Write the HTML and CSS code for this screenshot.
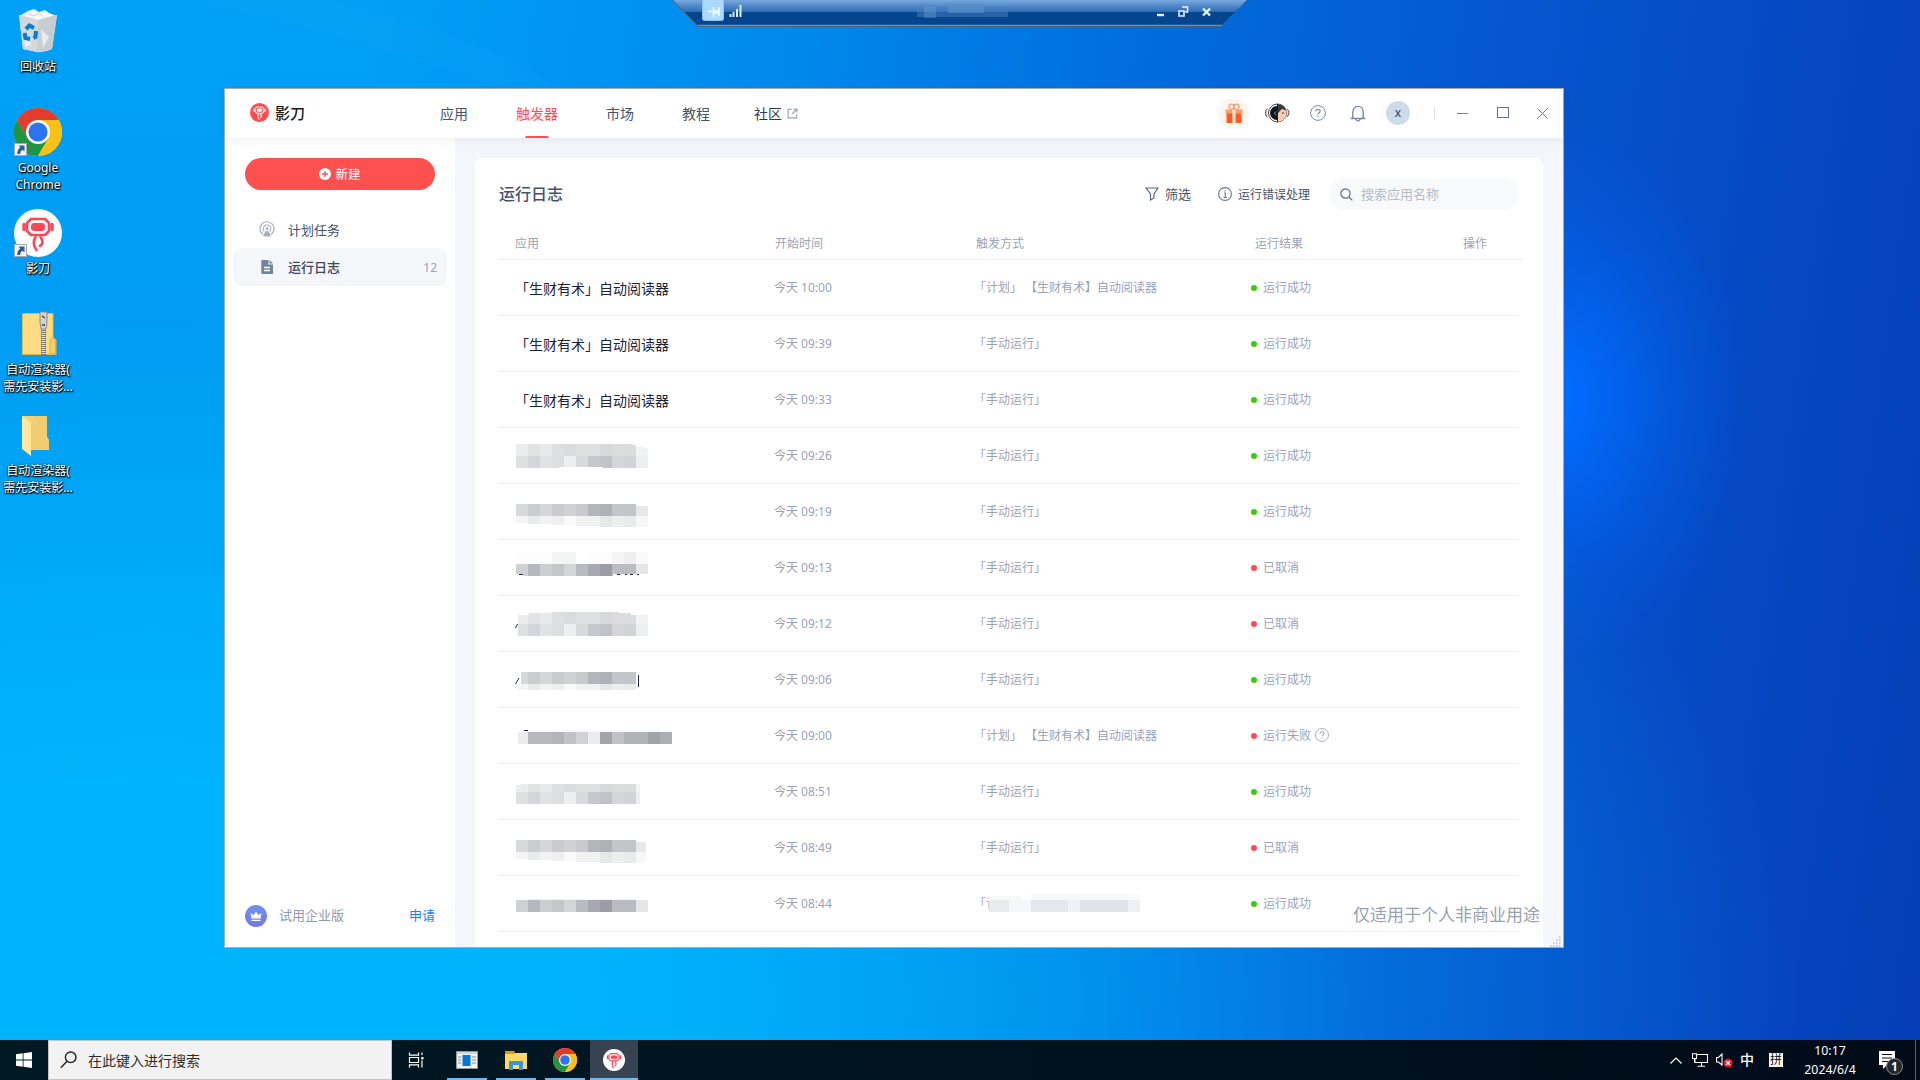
FILE: index.html
```html
<!DOCTYPE html>
<html lang="zh-CN">
<head>
<meta charset="utf-8">
<title>影刀</title>
<link rel="stylesheet" href="styles.css">
</head>
<body>
<svg class="defs" width="0" height="0">
  <defs>
    <symbol id="chrome" viewBox="0 0 48 48">
      <circle cx="24" cy="24" r="24" fill="#fbc116"/>
      <path d="M24 12H44.8A24 24 0 0 0 3.2 12L13.6 30Z" fill="#e33b2e"/>
      <path d="M3.2 12A24 24 0 0 0 24 48L34.4 30L24 24L13.6 30Z" fill="#229342"/>
      <path d="M34.4 30L24 48A24 24 0 0 0 44.8 12H24Z" fill="#fbc116"/>
      <circle cx="24" cy="24" r="12" fill="#fff"/>
      <circle cx="24" cy="24" r="9.6" fill="#2a74ee"/>
    </symbol>
    <symbol id="robot" viewBox="0 0 48 48">
      <g fill="none" stroke-linejoin="round" stroke-linecap="round">
        <path d="M17 10H31L35 14V22L31 26H17L13 22V14Z" stroke-width="2.6"/>
        <path d="M10 15.5V20.5M38 15.5V20.5" stroke-width="3.4"/>
        <path d="M21.5 28C18.5 33 19.5 37 22.500 41M26.500 28C29.500 32 29 35.500 26 37" stroke-width="2.6"/>
      </g>
      <rect x="17.500" y="14.500" width="13" height="7" rx="2.500" fill="currentColor"/>
    </symbol>
    <symbol id="shortcut" viewBox="0 0 13 13">
      <rect x=".5" y=".5" width="12" height="12" fill="#f4f4f4" stroke="#a8a8a8"/>
      <path d="M4.500 2.500H10.500V8.500L8.500 6.700C6.500 8 6.300 9 6.300 11H3.300C3.300 8 4 6.300 6.300 4.600Z" fill="#2b5c9e"/>
    </symbol>
    <symbol id="help" viewBox="0 0 16 16">
      <circle cx="8" cy="8" r="7.400" fill="none" stroke="currentColor"/>
      <path d="M5.900 6.300C5.900 3.600 10.200 3.700 10.200 6.200C10.200 7.800 8 7.800 8 9.500M8 10.800V12" fill="none" stroke="currentColor" stroke-width="1.200"/>
    </symbol>
    <linearGradient id="crown" x1="0" y1="0" x2="0" y2="1"><stop offset="0" stop-color="#6c92ee"/><stop offset="1" stop-color="#7678e4"/></linearGradient>
    <g id="mosaic-a">
      <path fill="#ebecee" d="M0 0h12v12H0z"/><path fill="#e2e3e5" d="M12 0h12v12H12z"/><path fill="#e8e9eb" d="M24 0h12v12H24z"/><path fill="#dddee0" d="M36 0h12v12H36z"/><path fill="#dadbdd" d="M48 0h12v12H48z"/><path fill="#dfe0e1" d="M60 0h24v12H60z"/><path fill="#d7d8da" d="M84 0h12v12H84z"/><path fill="#dddddf" d="M96 0h12v12H96z"/><path fill="#dbdcde" d="M108 0h12v12h-12z"/><path fill="#f1f2f2" d="M120 3h12v9h-12z"/>
      <path fill="#dfe0e2" d="M0 12h12v12H0z"/><path fill="#d4d5da" d="M12 12h12v12H12z"/><path fill="#e1e2e4" d="M24 12h12v12H24z"/><path fill="#dddee0" d="M36 12h12v12H36z"/><path fill="#edeef0" d="M48 12h12v12H48z"/><path fill="#d8d9dc" d="M60 12h12v12H60z"/><path fill="#c7c8cd" d="M72 12h12v12H72z"/><path fill="#c2c3c9" d="M84 12h12v12H84z"/><path fill="#d5d6da" d="M96 12h12v12H96z"/><path fill="#d2d3d6" d="M108 12h12v12h-12z"/><path fill="#eeeff1" d="M120 12h12v12h-12z"/>
    </g>
    <g id="mosaic-b">
      <path fill="#d7d8dc" d="M0 0h12v12H0z"/><path fill="#cbccd0" d="M12 0h12v12H12z"/><path fill="#d5d6d9" d="M24 0h12v12H24z"/><path fill="#cacbcf" d="M36 0h12v12H36z"/><path fill="#d0d1d5" d="M48 0h12v12H48z"/><path fill="#c8c9cc" d="M60 0h12v12H60z"/><path fill="#b5b6bc" d="M72 0h12v12H72z"/><path fill="#b0b1b8" d="M84 0h12v12H84z"/><path fill="#c4c5c9" d="M96 0h24v12H96z"/><path fill="#e8e8ea" d="M120 2h12v10h-12z"/>
      <path fill="#f5f5f5" d="M0 12h12v7H0z"/><path fill="#e9eaeb" d="M12 12h12v8H12z"/><path fill="#f2f2f2" d="M24 12h12v8H24z"/><path fill="#efefef" d="M36 12h12v9H36z"/><path fill="#f9f9f9" d="M48 12h12v9H48z"/><path fill="#f1f1f1" d="M60 12h24v10H60z"/><path fill="#e6e7e9" d="M84 12h12v11H84z"/><path fill="#eee" d="M96 12h12v11H96z"/><path fill="#e9eaea" d="M108 12h12v11h-12z"/><path fill="#f7f7f7" d="M120 12h12v11h-12z"/>
    </g>
    <g id="mosaic-c">
      <path fill="#d0d1d3" d="M0 0h12v12H0z"/><path fill="#b7b8bd" d="M12 0h12v12H12z"/><path fill="#cdced2" d="M24 0h12v12H24z"/><path fill="#c5c6ca" d="M36 0h12v12H36z"/><path fill="#d4d5d9" d="M48 0h12v12H48z"/><path fill="#b9babf" d="M60 0h12v12H60z"/><path fill="#a8a9af" d="M72 0h12v12H72z"/><path fill="#9b9da5" d="M84 0h12v12H84z"/><path fill="#bbbcc1" d="M96 0h24v12H96z"/><path fill="#e6e6e8" d="M120 0h12v12h-12z"/>
    </g>
  </defs>
</svg>

<div class="desktop">
  <svg class="rays" viewBox="0 0 1920 1080">
    <path d="M330 0Q480 35 560 88H500Q330 30 180 0Z" fill="#20b0ff" opacity=".08"/>
  </svg>

  <div class="shortcuts">
    <div class="shortcut">
      <svg width="48" height="48" viewBox="0 0 48 48">
        <path d="M5 8L43 8L38 42Q30 46 23 45L9 42Z" fill="#dfe3e6"/>
        <path d="M5 8L24 12L23 45L9 42Z" fill="#d3d8dc"/>
        <path d="M24 12L43 8L38 42L23 45Z" fill="#c8cdd1"/>
        <path d="M27 22L35 30L29 41ZM11 28L18 38L11 40Z" fill="#e9ecee"/>
        <path d="M7 8L14 4L20 2L25 5L31 3L35 6L40 8L24 13Z" fill="#f8f9fa"/>
        <path d="M14 7L20 9L25 6L30 10" fill="none" stroke="#cdd2d6"/>
        <g fill="none" stroke="#0c79d0" stroke-width="4"><path d="M12 22L15.500 18.500L20 21"/><path d="M22 24L21.500 30L19.500 31"/><path d="M16 32L11.500 31L10.500 26"/></g>
      </svg>
      <span class="shortcut-name">回收站</span>
    </div>
    <div class="shortcut">
      <div class="pic"><svg width="48" height="48"><use href="#chrome"/></svg><svg class="arrow" width="13" height="13"><use href="#shortcut"/></svg></div>
      <span class="shortcut-name">Google<br>Chrome</span>
    </div>
    <div class="shortcut">
      <div class="pic robot-disc"><svg width="48" height="48" stroke="#ff4556"><use href="#robot"/></svg><svg class="arrow" width="13" height="13"><use href="#shortcut"/></svg></div>
      <span class="shortcut-name">影刀</span>
    </div>
    <div class="shortcut">
      <svg width="48" height="48" viewBox="0 0 48 48">
        <path d="M8.500 3.500H39V27L42 30V44.500H8.500Z" fill="#fbdc82" stroke="#e6b84a"/>
        <path d="M36 44V31L38.500 27L41.500 30V44Z" fill="#f6cd66" stroke="#dfb04a"/>
        <path d="M29.500 17V45" stroke="#777" stroke-width="5"/><path d="M29.500 17V45" stroke="#e6e6e6" stroke-width="4" stroke-dasharray="1 1"/>
        <path d="M26 2H33V12L32 19H27L26 12Z" fill="#d2d2d4" stroke="#8a8a8c"/><path d="M28 6L31 8M28 15H31" stroke="#444" stroke-width="1.500"/>
      </svg>
      <span class="shortcut-name">自动渲染器(<br>需先安装影...</span>
    </div>
    <div class="shortcut">
      <svg width="48" height="48" viewBox="0 0 48 48">
        <path d="M8 5H33V26L35 29V39H16Z" fill="#f5d27a"/><path d="M20 5H33V26L35 29V39H17V12Z" fill="#f1cd70"/>
        <path d="M8 5L17 12V45L8 38Z" fill="#ffe79b"/>
      </svg>
      <span class="shortcut-name">自动渲染器(<br>需先安装影...</span>
    </div>
  </div>

  <svg class="rdp-bar" width="576" height="27" viewBox="0 0 576 27">
    <defs><linearGradient id="rdp" x1="0" y1="0" x2="0" y2="1"><stop offset="0" stop-color="#76a8de"/><stop offset=".48" stop-color="#2a6ab2"/><stop offset=".48" stop-color="#04458e"/><stop offset="1" stop-color="#04458e"/></linearGradient></defs>
    <path d="M.5 0L26 25.500H549.500L575 0Z" fill="url(#rdp)"/>
    <path d="M26 25.300H550" stroke="#7fa9d8"/><path d="M.5 0L26 26.400H550L575.500 0" fill="none" stroke="#54606c"/>
    <rect x="30.500" y="-2" width="21" height="22.500" rx="2" fill="#acd9ff" stroke="#8cc8fa"/>
    <path d="M36 11.500H41M41.500 7V17M42 11.500H47M47 7V16" stroke="#e9f6ff" stroke-width="1.800"/><path d="M42 10H47V14H42Z" fill="#e9f6ff"/>
    <path d="M58.500 17V14M61.500 17V12M65 17V9M68.500 17V5" stroke="#d8edff" stroke-width="2"/>
    <path d="M245 6h91v11h-91z" fill="#4a80c0" opacity=".5"/><path d="M252 7h12v11h-12zM276 6h36v7h-36z" fill="#6b9dd4" opacity=".4"/>
    <path d="M485 15H492" stroke="#e4f2ff" stroke-width="2.400"/>
    <path d="M507 11H512V16H507ZM510 7H515.500V12H513" fill="none" stroke="#e4f2ff" stroke-width="1.600"/>
    <path d="M531 8.500L538 15.500M538 8.500L531 15.500" stroke="#e4f2ff" stroke-width="2.400"/>
  </svg>

  <main class="window">
    <header class="topbar">
      <div class="brand">
        <svg width="19" height="19" viewBox="0 0 48 48" stroke="#fff" color="#fff"><circle cx="24" cy="24" r="24" fill="#ff4d4f" stroke="none"/><use href="#robot" width="48" height="48"/></svg>
        <span>影刀</span>
      </div>
      <nav class="tabs">
        <a class="tab">应用</a><a class="tab tab-active">触发器</a><a class="tab">市场</a><a class="tab">教程</a>
        <a class="tab tab-community">社区<svg width="11" height="11" viewBox="0 0 12 12" fill="none" stroke="#98a2b5" stroke-width="1.300"><path d="M5 1.500H1.200V10.800H10.500V7M7 1.200H10.800V5M10.500 1.500L5.500 6.500"/></svg></a>
      </nav>
      <div class="tools">
        <span class="gift"><svg width="18" height="21" viewBox="0 0 18 21"><path d="M1.500 9H16.500V20H1.500Z" fill="#ff5a26"/><path d="M.5 6.500H17.500V10.500H.5Z" fill="#ffa060"/><path d="M7.500 7H10.500V20H7.500Z" fill="#fff0dc"/><circle cx="6.500" cy="3.800" r="2.600" fill="none" stroke="#f79a78" stroke-width="1.300"/><circle cx="11.500" cy="3.800" r="2.600" fill="none" stroke="#f79a78" stroke-width="1.300"/></svg></span>
        <svg class="mascot" width="25" height="20" viewBox="0 0 25 20"><path d="M2.500 6Q.5 6 .5 10T2.500 14M22 6Q24.500 7 24 10T22 14" fill="#ddd" stroke="#555"/><circle cx="12.500" cy="10" r="9" fill="#fff" stroke="#444"/><circle cx="12" cy="10" r="7" fill="#14171a"/><path d="M12.500 1A9 9 0 0 1 12.500 19Z" fill="#f6cdb2"/><path d="M12.500 1Q19.500 1 21 7.500L17 6L13.500 9.500L12.500 11Z" fill="#333a40"/><path d="M12.500 1V19" stroke="#222"/><path d="M11 8.500L9.500 10L11 12" fill="none" stroke="#29b8c4"/><path d="M18 9V11" stroke="#333"/></svg>
        <svg class="help" width="16" height="16"><use href="#help"/></svg>
        <svg class="bell" width="16" height="17" viewBox="0 0 16 17" fill="none" stroke="#7b899f" stroke-width="1.400"><path d="M2.800 13.500V7C2.800 -.5 13.200 -.5 13.200 7V13.500M.5 13.500H15.500M5.500 14Q8 18 10.500 14"/></svg>
        <span class="avatar">x</span>
        <span class="rule"></span>
        <svg class="min" width="12" height="12"><path d="M0 6.500H11" stroke="#74829a" stroke-width="1"/></svg>
        <svg class="max" width="12" height="12"><rect x=".5" y=".5" width="11" height="10" fill="none" stroke="#66758f"/></svg>
        <svg class="close" width="11" height="11"><path d="M.5 .5L10.500 10.500M10.500 .5L.5 10.500" stroke="#66758f"/></svg>
      </div>
    </header>

    <div class="body">
      <aside class="sidebar">
        <button class="create"><svg width="12" height="12" viewBox="0 0 12 12"><circle cx="6" cy="6" r="6" fill="#fff"/><path d="M3 6H9M6 3V9" stroke="#ff5050" stroke-width="1.300"/></svg><span>新建</span></button>
        <div class="menu">
          <a class="menu-item"><svg width="16" height="16" viewBox="0 0 16 16" fill="none" stroke="#a5aebe" stroke-width="1.200"><path d="M4 13.500A7 7 0 1 1 12 13.500"/><path d="M5.300 10.500A3.800 3.800 0 1 1 10.700 10.500"/><circle cx="8" cy="7.500" r="1"/><path d="M5 15Q6 10.500 8 10.500T11 15Z" fill="#a5aebe"/></svg><span>计划任务</span></a>
          <a class="menu-item menu-active"><svg width="16" height="16" viewBox="0 0 16 16"><path d="M3 1H9.500V5.500H14V15H3Q2.300 15 2.300 14V2Q2.300 1 3 1Z" fill="#75849e"/><path d="M10.500 1L14 4.500H10.500Z" fill="#75849e"/><path d="M5 8.500H11M5 11.500H11" stroke="#fff" stroke-width="1.300"/></svg><span>运行日志</span><em>12</em></a>
        </div>
        <div class="trial">
          <svg width="22" height="22" viewBox="0 0 22 22"><circle cx="11" cy="11" r="11" fill="url(#crown)"/><path d="M5.500 8L8.500 10L11 6.500L13.500 10L16.500 8L15.500 13.500H6.500ZM6.500 14.700H15.500V16H6.500Z" fill="#fff"/></svg>
          <span>试用企业版</span><a>申请</a>
        </div>
      </aside>

      <section class="card">
        <div class="card-head">
          <h1>运行日志</h1>
          <div class="filter"><svg width="14" height="14" viewBox="0 0 14 14" fill="none" stroke="#5b6880" stroke-width="1.200"><path d="M1 1H13L9 7V11L5.500 13V7Z"/></svg><span>筛选</span></div>
          <div class="errors"><svg width="14" height="14" viewBox="0 0 14 14" fill="none" stroke="#6b778c" stroke-width="1.100"><circle cx="7" cy="7" r="6.400"/><path d="M6 6H7.300V10.500M5.500 10.500H9M7 3.200V4.500"/></svg><span>运行错误处理</span></div>
          <div class="search"><svg width="13" height="13" viewBox="0 0 13 13" fill="none" stroke="#5b6880" stroke-width="1.200"><circle cx="5.500" cy="5.500" r="4.600"/><path d="M9 9L12.300 12.300"/></svg><span>搜索应用名称</span></div>
        </div>
        <div class="row row-head"><span>应用</span><span>开始时间</span><span>触发方式</span><span>运行结果</span><span>操作</span></div>
        <div class="rows">
          <div class="row"><b>「生财有术」自动阅读器</b><span>今天 10:00</span><span>「计划」 【生财有术】自动阅读器</span><span class="ok">运行成功</span></div>
          <div class="row"><b>「生财有术」自动阅读器</b><span>今天 09:39</span><span>「手动运行」</span><span class="ok">运行成功</span></div>
          <div class="row"><b>「生财有术」自动阅读器</b><span>今天 09:33</span><span>「手动运行」</span><span class="ok">运行成功</span></div>
          <div class="row"><svg class="masked" width="160" height="55"><use href="#mosaic-a" x="1" y="16"/><path d="M116 16H133V21Q124 18 116 16ZM44 39H88V41H44Z" fill="#fff"/></svg><span>今天 09:26</span><span>「手动运行」</span><span class="ok">运行成功</span></div>
          <div class="row"><svg class="masked" width="160" height="55"><use href="#mosaic-b" x="1" y="20"/></svg><span>今天 09:19</span><span>「手动运行」</span><span class="ok">运行成功</span></div>
          <div class="row"><svg class="masked" width="160" height="55"><path d="M37 12h24v12H37z" fill="#f3f5f5"/><path d="M1 12h36v12H1zM73 12h24v12H73z" fill="#fcfcfc"/><path d="M97 12h12v12H97z" fill="#f5f5f5"/><path d="M109 12h12v12h-12z" fill="#efefef"/><path d="M121 12h12v12h-12z" fill="#f9f9f9"/><use href="#mosaic-c" x="1" y="24"/><path d="M1 34H8V36H1ZM98 34H134V36H98Z" fill="#fff"/><path d="M4 34.500H8M102 34.500H105M110 34.500H112M115 34.500H118M122 34.500H124" stroke="#222a3c"/></svg><span>今天 09:13</span><span>「手动运行」</span><span class="bad">已取消</span></div>
          <div class="row"><svg class="masked" width="160" height="55"><use href="#mosaic-a" x="1" y="16"/><path d="M0 16H36V17H14V19H3V41H0ZM104 16H134V19H116V17H104Z" fill="#fff"/><path d="M.5 32L2.500 28" stroke="#222a3c"/></svg><span>今天 09:12</span><span>「手动运行」</span><span class="bad">已取消</span></div>
          <div class="row"><svg class="masked" width="160" height="55"><use href="#mosaic-b" x="1" y="20"/><path d="M0 19H6V32H3V45H0ZM121 19H134V45H121ZM0 38H134V45H0Z" fill="#fff"/><path d="M.5 32L4 26M123.500 23V35" stroke="#222a3c"/></svg><span>今天 09:06</span><span>「手动运行」</span><span class="ok">运行成功</span></div>
          <div class="row"><svg class="masked" width="160" height="55"><path d="M13 22h144v2H13z" fill="#f8f8f8"/><path fill="#ebecee" d="M3 24h10v12H3zM73 24h12v12H73z"/><path fill="#b8b9be" d="M13 24h24v12H13z"/><path fill="#b3b4b9" d="M37 24h12v12H37z"/><path fill="#c1c2c6" d="M49 24h12v12H49zM97 24h12v12H97z"/><path fill="#d1d2d6" d="M61 24h12v12H61z"/><path fill="#a2a4aa" d="M85 24h12v12H85z"/><path fill="#b0b3b9" d="M109 24h24v12h-24z"/><path fill="#a2a3a8" d="M133 24h12v12h-12z"/><path fill="#acafb5" d="M145 24h12v12h-12z"/><path d="M9 22.500H13" stroke="#222a3c"/></svg><span>今天 09:00</span><span>「计划」 【生财有术】自动阅读器</span><span class="bad">运行失败<svg width="14" height="14"><use href="#help"/></svg></span></div>
          <div class="row"><svg class="masked" width="160" height="55"><use href="#mosaic-a" x="1" y="16"/><path d="M0 15H134V20H6V21H0ZM125 16H134V41H125Z" fill="#fff"/></svg><span>今天 08:51</span><span>「手动运行」</span><span class="ok">运行成功</span></div>
          <div class="row"><svg class="masked" width="160" height="55"><use href="#mosaic-b" x="1" y="20"/><path d="M131 19H134V45H131Z" fill="#fff"/></svg><span>今天 08:49</span><span>「手动运行」</span><span class="bad">已取消</span></div>
          <div class="row"><svg class="masked" width="160" height="55"><path d="M13 23h108v1H13z" fill="#f4f4f4"/><use href="#mosaic-c" x="1" y="24"/></svg><span>今天 08:44</span><span class="half-masked">「计<svg width="152" height="20"><path d="M0 2h32v4H0zM42 0h96v6H42z" fill="#f7f8f8"/><path d="M138 0h13v6h-13z" fill="#fbfbfb"/><path d="M0 6h20v12H0z" fill="#e9eaee"/><path d="M20 6h22v12H20z" fill="#f5f6f9"/><path d="M42 6h37v12H42z" fill="#e6e7ec"/><path d="M79 6h12v12H79z" fill="#eff0f3"/><path d="M91 6h48v12H91z" fill="#e2e3e8"/><path d="M139 6h12v12h-12z" fill="#eff0f3"/></svg></span><span class="ok">运行成功</span></div>
        </div>
      </section>
    </div>
    <div class="license">仅适用于个人非商业用途</div>
    <svg class="grip" width="13" height="13" fill="none" stroke="#b8bdc8" stroke-width="1.500" stroke-dasharray="1.500 1.500"><path d="M0 12H12M3 9H12M6 6H12M9 3H12"/></svg>
  </main>

  <footer class="taskbar">
    <div class="start"><svg width="16" height="16" viewBox="0 0 16 16" fill="#fff"><path d="M0 2.300L6.700 1.300V7.500H0ZM7.500 1.200L16 0V7.500H7.500ZM0 8.400H6.700V14.700L0 13.700ZM7.500 8.400H16V16L7.500 14.800Z"/></svg></div>
    <div class="task-search"><svg width="17" height="18" viewBox="0 0 17 18" fill="none" stroke="#222" stroke-width="1.400"><circle cx="10.700" cy="6.300" r="5.300"/><path d="M7 10.200L.8 16.800"/></svg>在此键入进行搜索</div>
    <div class="task-view"><svg width="16" height="16" viewBox="0 0 16 16" fill="none" stroke="#fff" stroke-width="1.200"><path d="M1.500 .5V3.200H10.500V.5M1.500 15.500V12.800H10.500V15.500M1.500 5.500H10.500V10.500H1.500ZM14 .5V3M14 8.500V15.500"/><path d="M13.200 5H15.500V7.500H13.200Z" fill="#fff" stroke="none"/></svg></div>
    <div class="task"><svg width="22" height="18" viewBox="0 0 22 18"><path d="M.5 .5H21.500V17.500H.5Z" fill="#f2f2f2" stroke="#8f999f"/><path d="M1 1H21V3H1Z" fill="#cfd6da"/><path d="M6.500 4H14.500V15H6.500Z" fill="#0078d7"/><path d="M2 6H5M2 9H5M2 12H5M16 6H20M16 9H20M16 12H20" stroke="#888"/></svg></div>
    <div class="task"><svg width="22" height="20" viewBox="0 0 22 20"><path d="M0 1H9L10 3H22V19H0Z" fill="#ffd868"/><path d="M0 1H9L10 4H0Z" fill="#dd9a12"/><path d="M4 20V11H18V20H14V15H8V20Z" fill="#3a94dc"/></svg></div>
    <div class="task"><svg width="24" height="24"><use href="#chrome"/></svg></div>
    <div class="task task-active"><span class="task-disc"><svg width="22" height="22" stroke="#ff4556"><use href="#robot"/></svg></span></div>
    <div class="tray">
      <svg class="up" width="12" height="7" fill="none" stroke="#fff" stroke-width="1.200"><path d="M.5 6.500L6 1L11.500 6.500"/></svg>
      <svg class="net" width="16" height="14" viewBox="0 0 16 14" fill="none" stroke="#fff" stroke-width="1.100"><path d="M5 1.500H15.500V9.500H3V6M9.500 9.500V13M5.500 13.300H13M.5 .8H4.500V5.500H.5ZM2.500 5.500V9.500"/></svg>
      <svg class="vol" width="18" height="15" viewBox="0 0 18 15"><path d="M.6 4.500H2.500L6 1V12L2.500 9H.6Z" fill="none" stroke="#fff" stroke-width="1.100"/><circle cx="12" cy="10" r="4.600" fill="#e81123"/><path d="M10 8L14 12M14 8L10 12" stroke="#fff" stroke-width="1.400"/></svg>
      <span class="ime">中</span><span class="pinyin">拼</span>
      <div class="clock"><span>10:17</span><span>2024/6/4</span></div>
      <svg class="notes" width="26" height="26" viewBox="0 0 26 26"><path d="M0 1H16V15H8L4 19V15H0Z" fill="#fff"/><path d="M3 4.500H13M3 8H13M3 11.500H9" stroke="#000c18"/><circle cx="15.500" cy="16.500" r="8" fill="#23282c" stroke="#8a8f93"/><text x="15.500" y="20.800" text-anchor="middle">1</text></svg>
    </div>
  </footer>
</div>
</body>
</html>
```
FILE: styles.css
```css
* { box-sizing: border-box; }
body {
  margin: 0;
  font-family: "Noto Sans", "Noto Sans CJK SC", sans-serif;
  font-size: 12px;
  overflow: hidden;
}
svg { display: block; flex: none; }
.defs { position: absolute; }

.desktop {
  position: relative;
  width: 1920px;
  height: 1080px;
  display: flex;
  flex-direction: column;
  background:
    radial-gradient(ellipse 190px 260px at 1555px 400px, rgba(0, 108, 255, .95) 10%, rgba(0, 104, 250, .35) 60%, rgba(0, 100, 240, 0)),
    linear-gradient(98deg, #00a0f6 0%, #00a0f6 18%, #008aec 38%, #006cdc 56%, #0558d0 72%, #054ac4 86%, #053eb6 100%);
}
.desktop::before {
  content: "";
  position: absolute;
  inset: 0;
  background: radial-gradient(ellipse 1650px 900px at 150px 1000px, rgba(0, 180, 252, 1) 25%, rgba(0, 172, 248, .75) 50%, rgba(0, 150, 240, .35) 75%, rgba(0, 130, 230, 0));
}
.rays { position: absolute; left: 0; top: 0; width: 1920px; height: 1080px; }

/* desktop shortcuts */
.shortcuts { position: relative; flex: 1; padding-top: 7px; width: 76px; }
.shortcut { height: 101px; display: flex; flex-direction: column; align-items: center; gap: 3px; }
.shortcut-name {
  color: #fff;
  line-height: 17px;
  text-align: center;
  white-space: nowrap;
  text-shadow: 1px 1px 1px #000, 0 1px 2px #000, 0 0 2px rgba(0, 0, 0, .8);
}
.pic { position: relative; width: 48px; height: 48px; }
.robot-disc { background: #fff; border-radius: 50%; color: #ff4556; }
.arrow { position: absolute; left: 0; bottom: 0; stroke: none; }

.rdp-bar { position: absolute; left: 672px; top: 0; }

/* application window */
.window {
  position: absolute;
  left: 224px;
  top: 88px;
  width: 1340px;
  height: 860px;
  border: 1px solid #a9abb0;
  background: #f5f6fb;
  display: flex;
  flex-direction: column;
}
.topbar {
  position: relative;
  z-index: 1;
  height: 49px;
  display: flex;
  align-items: center;
  background: #fff;
  box-shadow: 0 2px 8px rgba(40, 50, 80, .08);
}
.brand {
  display: flex;
  align-items: center;
  gap: 6px;
  width: 190px;
  margin-left: 25px;
  padding-bottom: 2px;
  color: #1c1c1e;
  font-size: 15px;
  font-weight: 500;
}
.tabs { display: flex; height: 100%; gap: 48px; font-size: 14px; line-height: 49px; color: #48536a; }
.tab { position: relative; white-space: nowrap; }
.tab-active { color: #ff4d4f; }
.tab-active::after {
  content: "";
  position: absolute;
  left: 9px;
  bottom: 0;
  width: 24px;
  height: 2px;
  border-radius: 2px 2px 0 0;
  background: #ff4d4f;
}
.tab-community { display: flex; align-items: center; gap: 5px; margin-left: -4px; color: #30394a; }
.tools { display: flex; align-items: center; margin-left: auto; padding: 0 15px 1px 0; color: #7b8ba3; }
.gift {
  width: 31px;
  height: 31px;
  border-radius: 50%;
  background: #fef6ee;
  display: flex;
  align-items: center;
  justify-content: center;
}
.mascot { margin-left: 16px; }
.help { margin-left: 20px; }
.bell { margin: 1px 0 0 24px; }
.avatar {
  width: 24px;
  height: 24px;
  margin-left: 20px;
  border-radius: 50%;
  background: #cddbea;
  color: #34435e;
  line-height: 23px;
  text-align: center;
}
.rule { width: 1px; height: 14px; margin-left: 24px; background: #e2e5ec; }
.min { margin-left: 22px; }
.max { margin-left: 28px; }
.close { margin-left: 28px; }

.body { flex: 1; min-height: 0; display: flex; }
.sidebar { width: 230px; padding: 20px 8px 18px; background: #fff; display: flex; flex-direction: column; }
.create {
  height: 32px;
  margin: 0 12px;
  padding: 0;
  border: 0;
  border-radius: 16px;
  background: #ff5050;
  color: #fff;
  font: inherit;
  font-size: 12.500px;
  display: flex;
  align-items: center;
  justify-content: center;
  gap: 4px;
}
.create span, .search span, .filter span { padding-bottom: 2px; }
.menu { margin-top: 20px; }
.menu-item {
  height: 38px;
  padding: 0 10px 0 26px;
  border-radius: 8px;
  display: flex;
  align-items: center;
  gap: 13px;
  font-size: 13px;
  color: #48536a;
}
.menu-active { background: #f5f6fa; color: #3c475c; font-weight: 500; }
.menu-active span { padding-bottom: 1px; }
.menu-item em { margin-left: auto; font-style: normal; font-size: 12px; font-weight: 400; color: #98a2b5; }
.trial { display: flex; align-items: center; margin: auto 12px 0; height: 26px; font-size: 13px; color: #8f99ac; }
.trial span { margin-left: 12px; padding-bottom: 3px; }
.trial a { margin-left: auto; padding-bottom: 3px; color: #1680fb; }

.card {
  width: 1068px;
  margin: 20px 0 0 20px;
  padding: 0 20px 0 24px;
  border-radius: 8px 8px 0 0;
  background: #fff;
}
.card-head { display: flex; align-items: center; height: 72px; margin-right: 4px; color: #48536a; }
.card-head h1 { margin: 0 auto 0 0; padding-bottom: 2px; font-size: 16px; font-weight: 500; }
.filter { display: flex; align-items: center; gap: 6px; font-size: 13px; }
.errors { display: flex; align-items: center; gap: 6px; margin-left: 27px; }
.search {
  display: flex;
  align-items: center;
  gap: 8px;
  width: 190px;
  height: 32px;
  margin-left: 19px;
  padding-left: 11px;
  border-radius: 16px;
  background: #f8f9fb;
  font-size: 13px;
  color: #b2bbcc;
}
.row {
  display: grid;
  grid-template-columns: 259px 200px 277px 211px 1fr;
  align-items: center;
  height: 56px;
  margin-right: 4px;
  padding-left: 16px;
  border-bottom: 1px solid #ebecf0;
  color: #9aa3b6;
  white-space: nowrap;
}
.row > span { padding-bottom: 1px; }
.row-head { height: 30px; margin-right: 0; padding-bottom: 3px; grid-template-columns: 260px 201px 279px 208px 1fr; }
.row b { font-size: 14px; font-weight: 400; color: #1b2335; }
.masked { align-self: start; }
.ok, .bad { display: flex; align-items: center; gap: 6px; }
.ok::before, .bad::before { content: ""; width: 6px; height: 6px; margin-top: 1px; border-radius: 50%; background: #45c510; }
.bad::before { background: #fb4c53; }
.bad svg { margin-left: -2px; }
.half-masked { position: relative; }
.half-masked svg { position: absolute; left: 15px; top: 0; background: #fff; }
.license {
  position: absolute;
  right: 23px;
  bottom: 20px;
  font-size: 17px;
  line-height: 24px;
  color: #98a1b1;
}
.grip { position: absolute; right: 0; bottom: 0; }

/* taskbar */
.taskbar {
  position: relative;
  height: 40px;
  display: flex;
  align-items: stretch;
  background: linear-gradient(90deg, #001923, #001420 45%, #000b18);
}
.start { width: 48px; display: flex; align-items: center; justify-content: center; }
.task-search {
  width: 344px;
  padding-left: 11px;
  border: 1px solid #c4c4c4;
  background: #f2f2f2;
  display: flex;
  align-items: center;
  gap: 11px;
  font-size: 14px;
  color: #2b2b2b;
}
.task-view { width: 48px; margin-right: 3px; display: flex; align-items: center; justify-content: center; }
.task {
  position: relative;
  width: 48px;
  margin-right: 1px;
  display: flex;
  align-items: center;
  justify-content: center;
}
.task::after { content: ""; position: absolute; left: 4px; right: 4px; bottom: 0; height: 2px; background: #76b9ed; }
.task-active { background: #374350; }
.task-active::after { left: 0; right: 0; }
.task-disc { width: 22px; height: 22px; border-radius: 50%; background: #fff; color: #ff4556; }
.tray { display: flex; align-items: center; margin-left: auto; padding-right: 10px; color: #fff; }
.net { margin-left: 10px; }
.vol { margin-left: 8px; }
.ime { margin-left: 6px; padding-bottom: 2px; font-size: 14px; font-weight: 500; }
.pinyin {
  width: 14px;
  height: 14px;
  margin-left: 15px;
  background: #fff;
  color: #000b18;
  line-height: 13px;
  text-align: center;
}
.clock { display: flex; flex-direction: column; width: 94px; line-height: 19px; font-size: 12.300px; text-align: center; }
.notes { margin-left: 2px; margin-top: 5px; }
.notes text { font-size: 12px; font-weight: 700; fill: #fff; }
.taskbar::after { content: ""; width: 1px; margin-right: 4px; background: #5a6470; }
```
